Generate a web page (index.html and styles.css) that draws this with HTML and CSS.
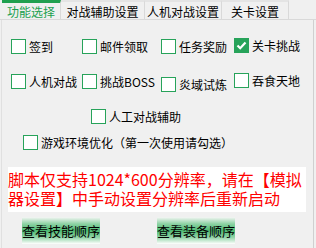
FILE: index.html
```html
<!DOCTYPE html>
<html>
<head>
<meta charset="utf-8">
<link rel="stylesheet" href="styles.css">
</head>
<body>
<div class="tabs">
  <div class="tab tab1 active">功能选择</div>
  <div class="tab tab2">对战辅助设置</div>
  <div class="tab tab3">人机对战设置</div>
  <div class="tab tab4">关卡设置</div>
</div>
<div class="panel">
  <div class="grid row1">
    <label class="item"><span class="box"></span>签到</label>
    <label class="item"><span class="box"></span>邮件领取</label>
    <label class="item"><span class="box"></span>任务奖励</label>
    <label class="item up1"><span class="box checked"><svg width="13" height="13" viewBox="0 0 13 13"><path d="M2.5 6.5 L5.2 9.2 L10.5 3.5" fill="none" stroke="#fff" stroke-width="2.2"/></svg></span>关卡挑战</label>
  </div>
  <div class="grid row2">
    <label class="item"><span class="box"></span>人机对战</label>
    <label class="item"><span class="box"></span>挑战BOSS</label>
    <label class="item down3"><span class="box"></span>炎域试炼</label>
    <label class="item up1"><span class="box"></span>吞食天地</label>
  </div>
  <div class="row3">
    <label class="item"><span class="box"></span>人工对战辅助</label>
  </div>
  <div class="row4">
    <label class="item"><span class="box"></span>游戏环境优化（第一次使用请勾选）</label>
  </div>
  <div class="notice">脚本仅支持1024*600分辨率，请在【模拟<br>器设置】中手动设置分辨率后重新启动</div>
  <div class="buttons">
    <button class="btn">查看技能顺序</button>
    <button class="btn">查看装备顺序</button>
  </div>
</div>
</body>
</html>
```
FILE: styles.css
```css
html, body {
  margin: 0;
  padding: 0;
  background: #f0f0f0;
  width: 316px;
  height: 248px;
  overflow: hidden;
  font-family: "Noto Sans CJK SC", "Liberation Sans", sans-serif;
  font-size: 12px;
  color: #000;
}
.tabs {
  display: flex;
  height: 19px;
  padding-left: 2px;
  border-bottom: 1px solid #d9d9d9;
  box-sizing: content-box;
}
.tab {
  box-sizing: border-box;
  height: 19px;
  padding-top: 2px;
  border-top: 2px solid #e4e4e4;
  border-right: 1px solid #d9d9d9;
  line-height: 15px;
  text-align: center;
  font-size: 12px;
}
.tab.active {
  border-top: 3px solid #20a04f;
  padding-top: 1px;
  color: #20a04f;
}
.tab1 { width: 59px; }
.tab2 { width: 84px; }
.tab3 { width: 77px; }
.tab4 { width: 67px; }
.panel {
  margin-left: 1px;
  width: 311px;
  height: 228px;
  border-left: 1px solid #e0e0e0;
  border-right: 1px solid #d0d0d0;
}
.grid {
  display: grid;
  grid-template-columns: 71px 79px 73px 1fr;
  padding-left: 9px;
  align-items: start;
}
.row1 { padding-top: 19px; height: 35px; }
.row2 { height: 35px; }
.row3 { padding-left: 89px; height: 26px; }
.row4 { padding-left: 21px; height: 32px; }
.item {
  display: flex;
  align-items: center;
  gap: 3px;
  height: 15px;
  line-height: 15px;
  white-space: nowrap;
}
.up1 { margin-top: -1px; }
.down3 { margin-top: 3px; }
.box {
  box-sizing: border-box;
  width: 15px;
  height: 15px;
  border: 1px solid #27a35a;
  background: #fff;
  flex: none;
  display: flex;
}
.box.checked {
  background: #27a35a;
}
.notice {
  margin-left: 6px;
  width: 298px;
  height: 45px;
  box-sizing: border-box;
  background: #fff;
  color: #ff0000;
  font-size: 16px;
  line-height: 19px;
  padding-top: 3px;
  white-space: nowrap;
}
.buttons {
  display: flex;
  padding-left: 20px;
  gap: 57px;
  margin-top: 5px;
}
.btn {
  width: 78px;
  height: 27px;
  border: none;
  padding: 0;
  font-family: "Noto Sans CJK SC", sans-serif;
  font-size: 13px;
  color: #000;
  background: linear-gradient(#f6f6f6 0%, #8fd3a5 25%, #4dba72 50%, #8fd3a5 75%, #ffffff 100%);
}
```
